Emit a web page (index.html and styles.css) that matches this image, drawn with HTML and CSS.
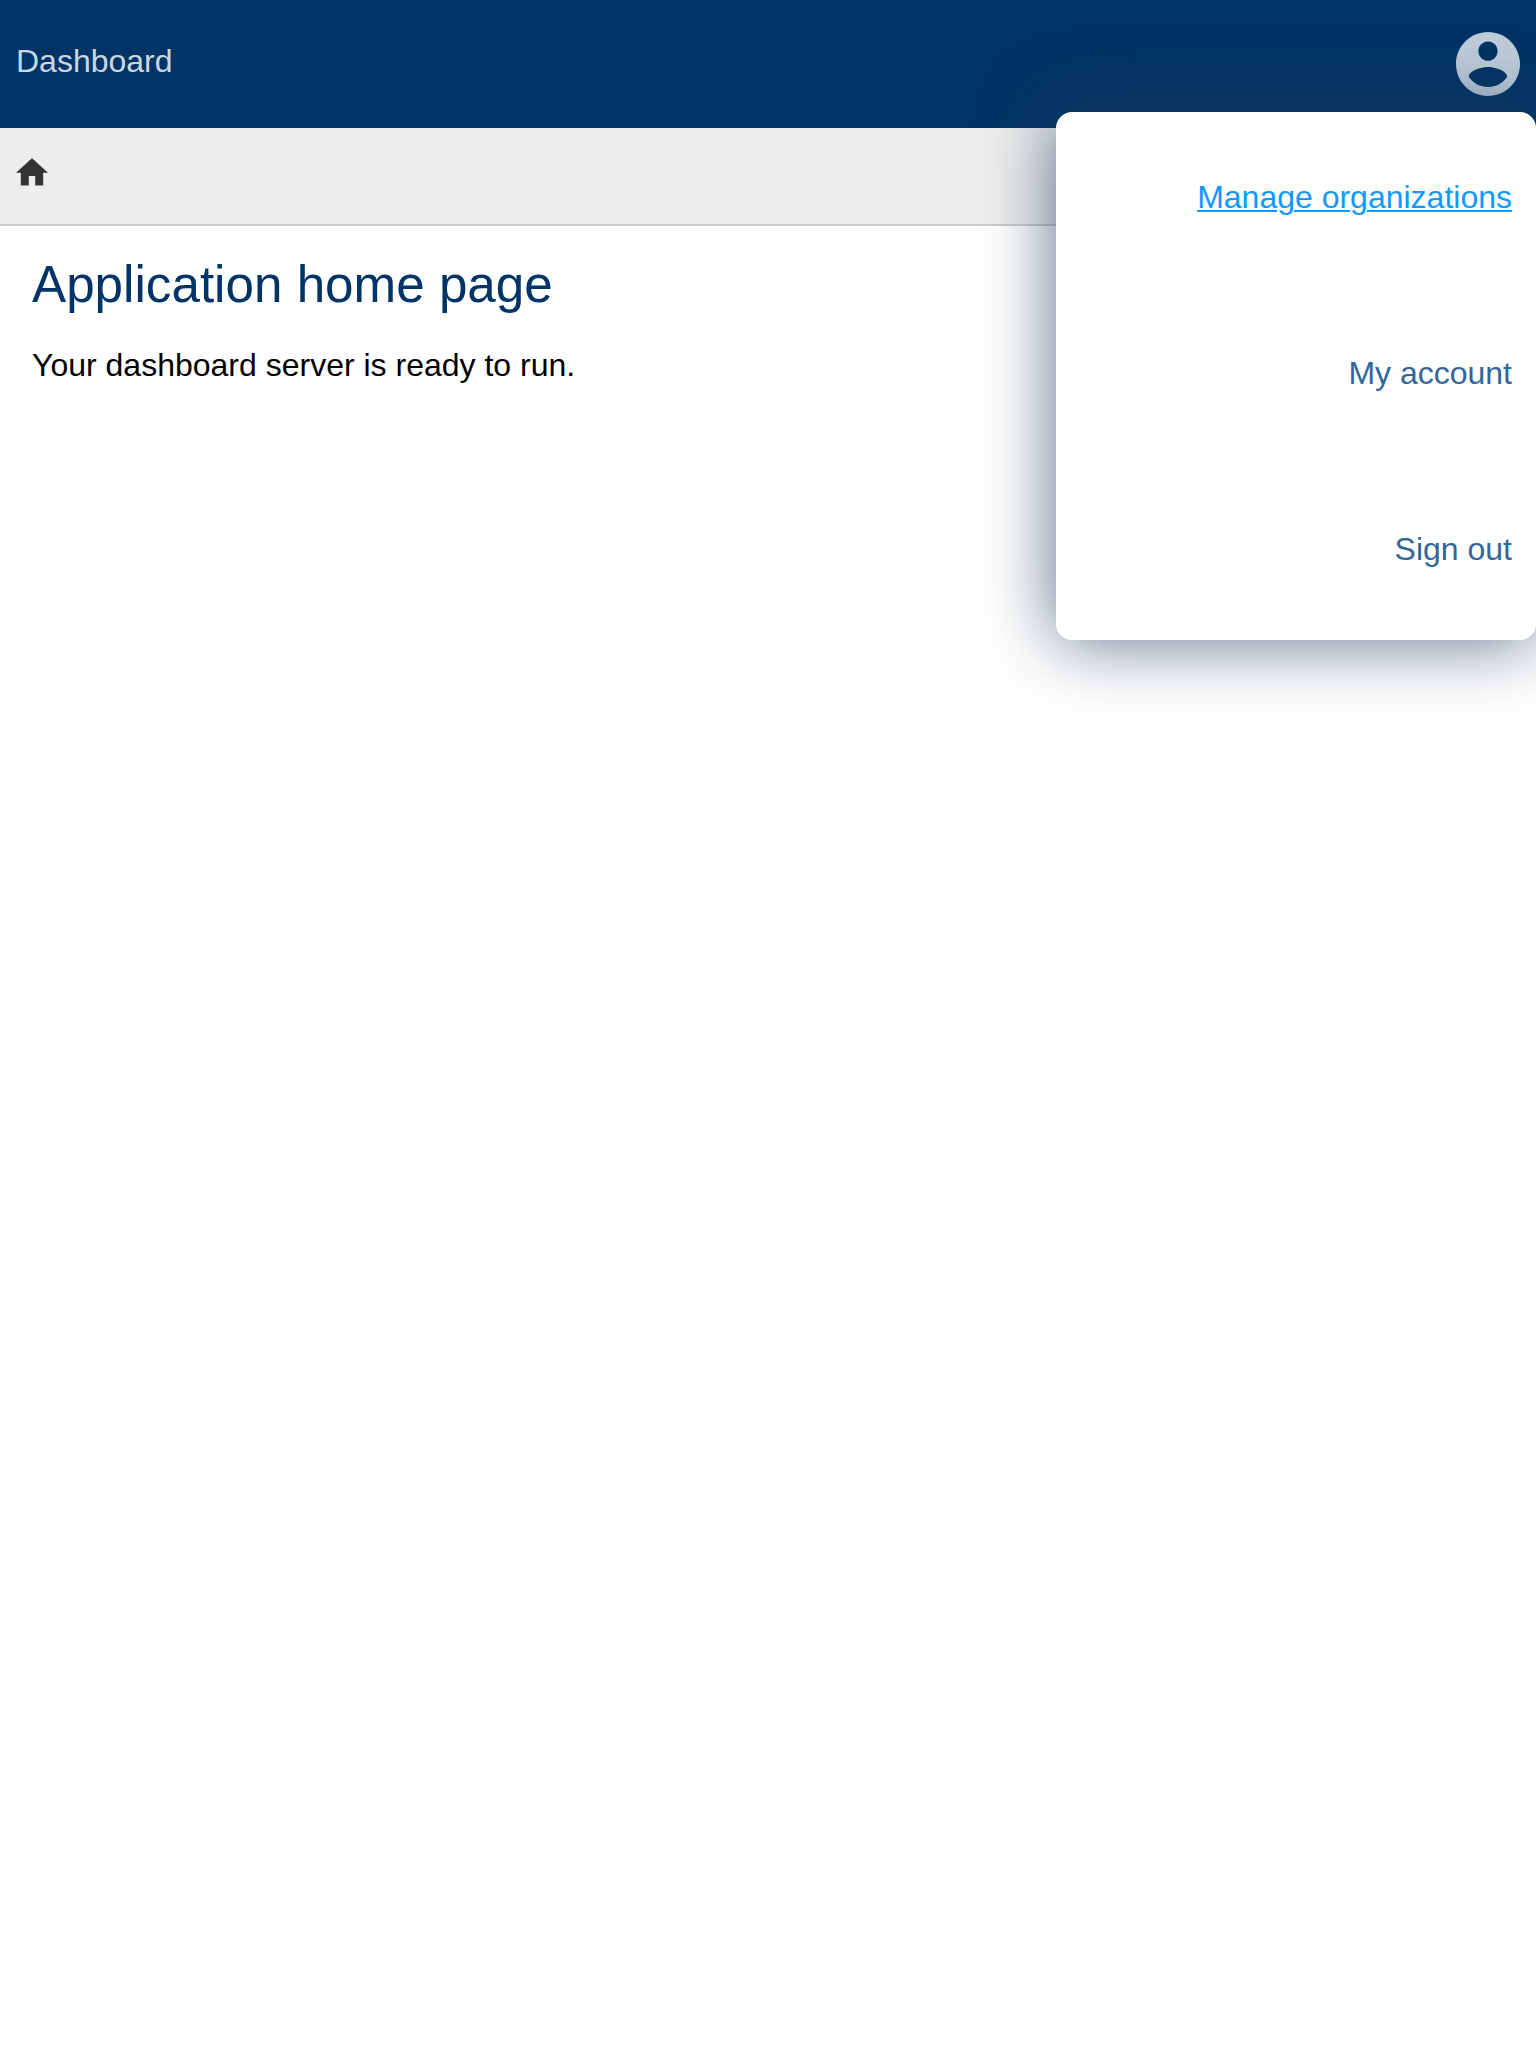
FILE: index.html
```html
<!DOCTYPE html>
<html lang="en">
<head>
<meta charset="utf-8">
<title>Dashboard</title>
<link rel="stylesheet" href="styles.css">
</head>
<body>
<header class="header">
  <span class="brand">Dashboard</span>
  <div class="account">
    <svg class="avatar" viewBox="2 2 20 20" role="img" aria-label="Account"><path d="M12 2C6.48 2 2 6.48 2 12s4.48 10 10 10 10-4.48 10-10S17.52 2 12 2zm0 3c1.66 0 3 1.34 3 3s-1.34 3-3 3-3-1.34-3-3 1.34-3 3-3zm0 14.2c-2.5 0-4.71-1.28-6-3.22.03-1.99 4-3.08 6-3.08 1.99 0 5.97 1.09 6 3.08-1.29 1.94-3.5 3.22-6 3.22z"/></svg>
    <nav class="menu">
      <a class="item active">Manage organizations</a>
      <a class="item">My account</a>
      <a class="item">Sign out</a>
    </nav>
  </div>
</header>
<div class="crumbs">
  <svg class="home" viewBox="2 2.8 20 17.5" role="img" aria-label="Home"><path d="M10 20v-6h4v6h5v-8h3L12 3 2 12h3v8z"/></svg>
</div>
<main class="content">
  <h1 class="title">Application home page</h1>
  <p class="text">Your dashboard server is ready to run.</p>
</main>
</body>
</html>
```
FILE: styles.css
```css
* { box-sizing: border-box; }
html { height: 100%; }
body {
  min-height: 100vh;
  margin: 0;
  background: #fff;
  color: #000;
  font: 32px/40px "Liberation Sans", Arial, sans-serif;
}
.header {
  position: relative;
  display: flex;
  justify-content: space-between;
  height: 128px;
  padding: 32px 16px;
  background: #003366;
}
.brand { padding-top: 9px; color: #ccd6e0; }
.avatar { display: block; width: 64px; height: 64px; fill: #bfccd9; }
.menu {
  position: absolute;
  z-index: 2;
  top: 112px;
  right: 0;
  width: 480px;
  border-radius: 16px;
  background: #fff;
  box-shadow: 0 0 72px rgba(30, 60, 92, .74);
}
.item {
  display: block;
  height: 176px;
  padding: 65px 24px 0;
  color: #336699;
  text-align: right;
}
.active {
  color: #1199ff;
  text-decoration: underline;
  text-decoration-thickness: 2px;
  text-underline-offset: 2px;
}
.crumbs {
  height: 98px;
  padding: 30px 16px;
  border-bottom: 2px solid #ccc;
  background: #eee;
}
.home { display: block; width: 32px; height: 28px; fill: #333; }
.content { padding: 27px 32px; }
.title {
  margin: 0;
  color: #003366;
  font-size: 51.2px;
  font-weight: 400;
  line-height: 64px;
}
.text { margin: 28px 0 0; }
```
